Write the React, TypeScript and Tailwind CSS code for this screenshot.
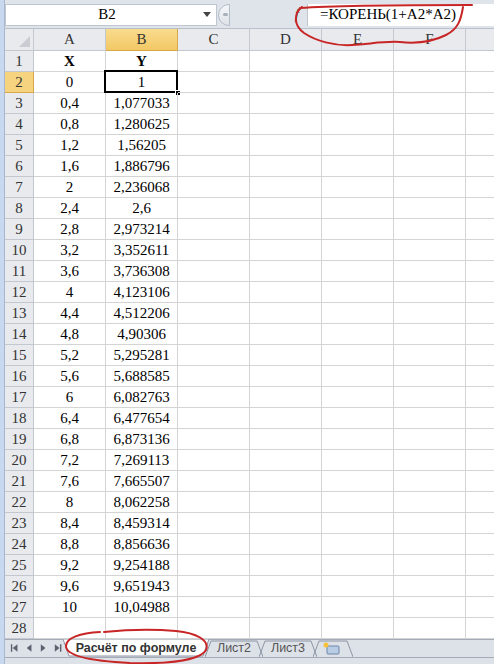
import React from 'react';

const xs = ['0', '0,4', '0,8', '1,2', '1,6', '2', '2,4', '2,8', '3,2', '3,6', '4', '4,4', '4,8', '5,2', '5,6', '6', '6,4', '6,8', '7,2', '7,6', '8', '8,4', '8,8', '9,2', '9,6', '10'];
const ys = ['1', '1,077033', '1,280625', '1,56205', '1,886796', '2,236068', '2,6', '2,973214', '3,352611', '3,736308', '4,123106', '4,512206', '4,90306', '5,295281', '5,688585', '6,082763', '6,477654', '6,873136', '7,269113', '7,665507', '8,062258', '8,459314', '8,856636', '9,254188', '9,651943', '10,04988'];
// G is only partly on screen, its letter falls outside
const cols = ['A', 'B', 'C', 'D', 'E', 'F', ''];

function Cell({ children, bold, selected }: { children?: React.ReactNode; bold?: boolean; selected?: boolean }) {
  return (
    <div className={`relative w-[72px] shrink-0 h-full border-r border-b border-[#d4d4d4] flex items-center justify-center text-[15px] text-black ${bold ? 'font-bold' : ''}`}>
      {children}
      {selected && (
        <>
          <div className="absolute -left-[2px] -top-[2px] -right-[1px] -bottom-[1px] border-2 border-black" />
          <div className="absolute -right-[4px] -bottom-[4px] w-[6px] h-[6px] bg-black border border-white" />
        </>
      )}
    </div>
  );
}

function RowHead({ n, active }: { n: number; active?: boolean }) {
  return (
    <div className={`w-[29px] shrink-0 h-full border-r border-b flex items-center justify-center text-[15px] ${active ? 'bg-[#f6d37f] border-[#d8a94a] text-[#333]' : 'bg-[#e8eaee] border-[#c3c7cf] text-[#333]'}`}>
      {n}
    </div>
  );
}

function NavArrow({ dir, bar }: { dir: 'l' | 'r'; bar?: boolean }) {
  return (
    <svg width="12" height="10" viewBox="0 0 12 10">
      {dir === 'l' ? (
        <>
          {bar && <rect x="2" y="1" width="1.5" height="8" fill="#5a6270" />}
          <polygon points="9,1 9,9 4,5" fill="#5a6270" />
        </>
      ) : (
        <>
          <polygon points="3,1 3,9 8,5" fill="#5a6270" />
          {bar && <rect x="8.5" y="1" width="1.5" height="8" fill="#5a6270" />}
        </>
      )}
    </svg>
  );
}

function Tab({ label, w }: { label?: string; w: number }) {
  return (
    <div className="relative h-[17px] -ml-[4px] flex items-center justify-center text-[#555]" style={{ width: w }}>
      <svg className="absolute inset-0" width={w} height="17" viewBox={`0 0 ${w} 17`}>
        <polyline points={`0,17 6,1 ${w - 6},1 ${w},17`} fill="none" stroke="#8e96a3" strokeWidth="1" />
        {!label && (
          <>
            <rect x="14" y="6" width="12" height="8" rx="1" fill="#b9cce6" stroke="#6f86a8" strokeWidth="1" />
            <circle cx="13" cy="5" r="2.5" fill="#f5c23a" />
          </>
        )}
      </svg>
      {label && <span className="relative">{label}</span>}
    </div>
  );
}

export default function App() {
  return (
    <div className="relative w-[494px] h-[664px] overflow-hidden bg-white flex font-['Liberation_Serif',serif]">
      {/* window frame strip */}
      <div className="w-[5px] shrink-0 bg-[#c8d8ee] border-r border-[#a9b8cc]" />

      <div className="flex-1 flex flex-col min-w-0">
        {/* formula bar */}
        <div className="h-[29px] shrink-0 bg-[#dfe4eb] border-b border-[#b9c0ca] flex items-center pt-[1px]">
          <div className="w-[212px] h-[22px] bg-white border border-[#bfc6d0] flex items-center relative">
            <span className="flex-1 text-center text-[15px] pl-[6px]">B2</span>
            <svg width="10" height="6" viewBox="0 0 10 6" className="mr-[4px]">
              <polygon points="1,0 9,0 5,5" fill="#444" />
            </svg>
          </div>
          <div className="w-[12px] h-[22px] ml-[1px] rounded-l-full border border-[#b4bcc7] bg-gradient-to-b from-[#f4f6f9] to-[#dfe3e9] flex items-center justify-center">
            <div className="w-[5px] h-[3px] bg-[#a9b0ba] rounded-full ml-[3px]" />
          </div>
          <div className="flex-1" />
          <span className="italic text-[15px] text-[#333] mr-[8px]">f</span>
          <div className="w-[187px] h-[22px] bg-white border-l border-[#bfc6d0] flex items-center pl-[12px] text-[15px] whitespace-nowrap">
            =КОРЕНЬ(1+A2*A2)
          </div>
        </div>

        {/* column headers */}
        <div className="h-[22px] shrink-0 flex">
          <div className="w-[29px] shrink-0 bg-[#e8eaee] border-r border-b border-[#c3c7cf] flex items-end justify-end p-[3px]">
            <svg width="11" height="11" viewBox="0 0 11 11">
              <polygon points="11,0 11,11 0,11" fill="#c9ccd2" />
            </svg>
          </div>
          {cols.map((c, i) => (
            <div
              key={i}
              className={`w-[72px] shrink-0 border-r border-b flex items-center justify-center text-[15px] text-[#333] ${c === 'B' ? 'bg-gradient-to-b from-[#f9dc8e] to-[#f3c864] border-[#d8a94a]' : 'bg-[#e8eaee] border-[#c3c7cf]'}`}
            >
              {c}
            </div>
          ))}
        </div>

        {/* rows */}
        <div className="h-[21px] shrink-0 flex">
          <RowHead n={1} />
          <Cell bold>X</Cell>
          <Cell bold>Y</Cell>
          <Cell /><Cell /><Cell /><Cell /><Cell />
        </div>
        {xs.map((x, i) => (
          <div key={i} className="h-[21px] shrink-0 flex">
            <RowHead n={i + 2} active={i === 0} />
            <Cell>{x}</Cell>
            <Cell selected={i === 0}>{ys[i]}</Cell>
            <Cell /><Cell /><Cell /><Cell /><Cell />
          </div>
        ))}
        <div className="h-[21px] shrink-0 flex">
          <RowHead n={28} />
          <Cell /><Cell /><Cell /><Cell /><Cell /><Cell /><Cell />
        </div>

        {/* sheet tabs */}
        <div className="h-[18px] shrink-0 bg-[#dde1e8] border-t border-[#a4abb6] flex items-start font-['Liberation_Sans',sans-serif] text-[12.5px]">
          <div className="flex items-center gap-[3px] pl-[4px] pt-[3px] w-[58px]">
            <NavArrow dir="l" bar />
            <NavArrow dir="l" />
            <NavArrow dir="r" />
            <NavArrow dir="r" bar />
          </div>
          <div className="relative h-[18px] -mt-[1px] w-[146px] flex items-center justify-center font-bold text-[#333]">
            <svg className="absolute inset-0" width="146" height="18" viewBox="0 0 146 18">
              <polygon points="0,0 146,0 140,17 6,17" fill="#fff" stroke="#8e96a3" strokeWidth="1" />
            </svg>
            <span className="relative">Расчёт по формуле</span>
          </div>
          <Tab label="Лист2" w={58} />
          <Tab label="Лист3" w={58} />
          <Tab w={40} />
        </div>
        <div className="flex-1 bg-[#dde1e8] border-t border-[#a4abb6]" />
      </div>

      {/* red annotations */}
      <svg className="absolute inset-0 pointer-events-none" width="494" height="664" viewBox="0 0 494 664">
        <path
          d="M 302 7 C 294 13, 293 25, 304 33 C 316 41, 334 46, 352 45 C 370 44, 384 41, 400 42 C 418 44, 434 41, 446 35 C 458 29, 461 20, 463 7 M 300 8 C 340 5, 420 5, 472 5"
          fill="none"
          stroke="#c82626"
          strokeWidth="2"
          strokeLinecap="round"
        />
        <path
          d="M 100 632 C 80 633, 66 638, 66 646 C 66 656, 90 661, 130 663 C 170 664, 200 660, 206 650 C 210 640, 196 633, 176 631 C 152 629, 124 630, 104 632"
          fill="none"
          stroke="#c82626"
          strokeWidth="2"
          strokeLinecap="round"
        />
      </svg>
    </div>
  );
}
